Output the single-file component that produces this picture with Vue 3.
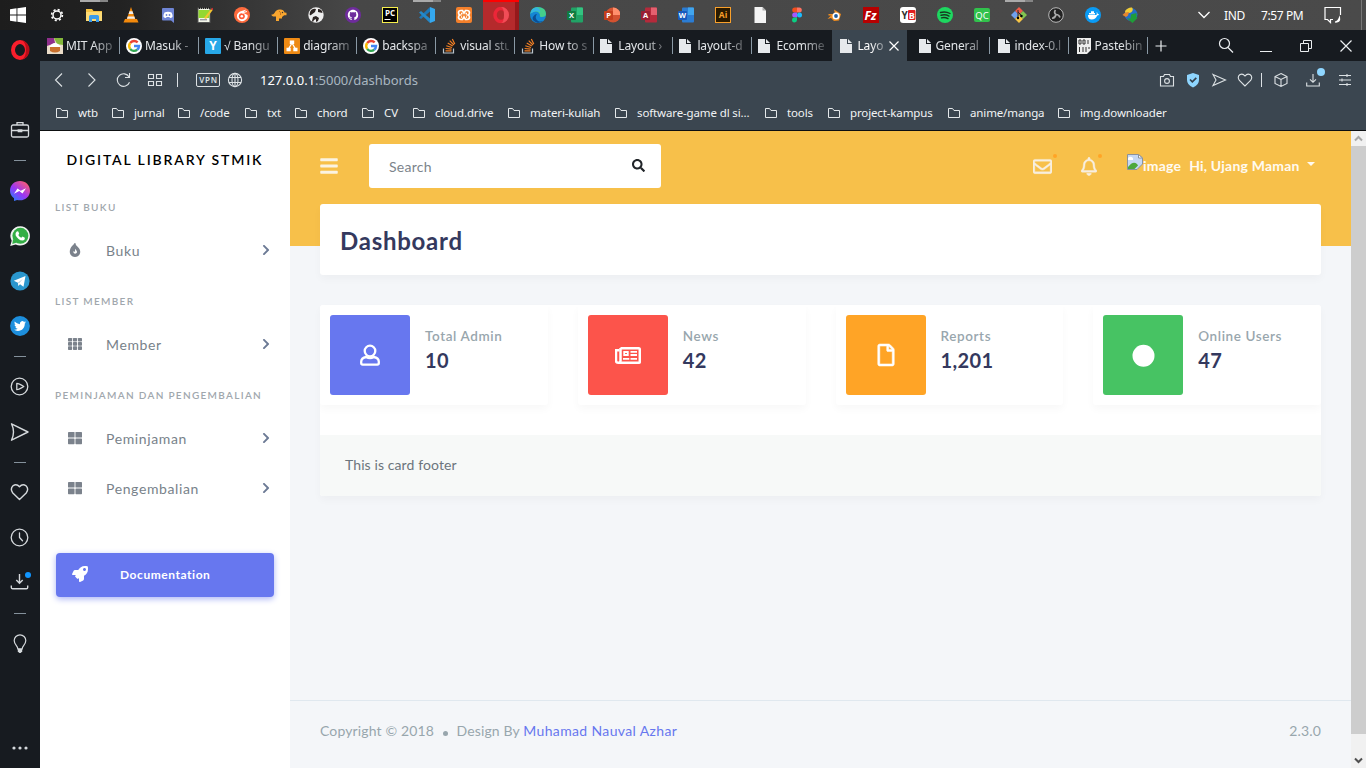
<script setup>
const sans = 'font-family="Open Sans, Noto Sans, sans-serif" font-weight="700" text-anchor="middle"'

const office = (a, b, c, letter, round) =>
  (round
    ? `<circle cx="9" cy="8" r="7.5" fill="${a}"/><path d="M9 .5A7.5 7.5 0 0 1 16.500 8H9z" fill="${b}"/>`
    : `<rect x="4" y="0.500" width="12" height="15" rx="1" fill="${a}"/><path d="M10 .5h5a1 1 0 0 1 1 1V8h-6z" fill="${b}"/>`) +
  `<rect y="4" width="9" height="9" rx="1" fill="${c}"/><text x="4.5" y="11.2" font-size="7.500" fill="#fff" ${sans}>${letter}</text>`

const apps = [
  { n: 'settings', s: '<g fill="none" stroke="#fff"><circle cx="8" cy="8" r="4" stroke-width="1.5"/><circle cx="8" cy="8" r="5.400" stroke-width="1.600" stroke-dasharray="2.1 2.14"/></g>' },
  { n: 'files', open: true, s: '<path d="M0 2h6l1.500 2H16v10H0z" fill="#f6c445"/><path d="M0 5h16v9H0z" fill="#fddb75"/><path d="M3 15V9.500q0-1.500 1.500-1.500h7q1.500 0 1.500 1.500V15h-3v-3H6v3z" fill="#3b9bea"/>' },
  { n: 'vlc', s: '<path d="M2 12h12l1.500 3.500H.5z" fill="#f58a0b"/><path d="M8 0 12.600 13H3.400z" fill="#f58a0b"/><path d="M6.500 4.300h3l.9 2.600H5.600zM4.700 9.500h6.600l.8 2.200H3.900z" fill="#eee"/>' },
  { n: 'discord', s: '<path d="M3 1h10a1 1 0 0 1 1 1v14l-3-2.500H3a1 1 0 0 1-1-1V2a1 1 0 0 1 1-1z" fill="#6f85d5"/><path d="M4.500 5.500Q8 4 11.500 5.500q1.200 2 1 4.500-1 1-2.500 1l-.6-.9H6.600L6 11q-1.500 0-2.500-1-.2-2.500 1-4.500z" fill="#fff"/><circle cx="6.500" cy="8" r=".9" fill="#6f85d5"/><circle cx="9.500" cy="8" r=".9" fill="#6f85d5"/>' },
  { n: 'notepad', s: '<rect x="1" y="1" width="12" height="14.500" fill="#f4f7ea" stroke="#555"/><rect x="1.500" y="3" width="11" height="8" fill="#93d832"/><path d="M3 12.800h7" stroke="#778"/><path d="M2 1h11" stroke="#222" stroke-dasharray="1 1" stroke-width="2"/><path d="m7 11 7-9 1.600 1.300L9 12z" fill="#f4c430"/><path d="m14 2 1-1.200 1.500 1.200-1 1.300z" fill="#d33"/>' },
  { n: 'pomodoro', s: '<circle cx="8" cy="8" r="8" fill="#ff6b3d"/><path d="M12.500 2.500 6 4.500Q1.500 7 3.500 11.500q3 4 7 2Q14.500 11 13.500 8L9 5.800z" fill="#fff"/><circle cx="7.800" cy="9.300" r="3" fill="#ff5a36"/><circle cx="7.800" cy="9.300" r="1.300" fill="#fff"/><path d="m8 6 5-1.500" stroke="#fff"/>' },
  { n: 'elephant', s: '<path d="M5 14V9.500Q.5 10 .5 7.500 2 8 3.500 6 5 2.500 8.500 2.500q4-.5 5 3l2 .2v2.500h-2.300L11 10v1.500H8V14z" fill="#f9a62f"/><path d="M8 4q2.500 1.500 1.500 4" fill="none" stroke="#c9731a"/><circle cx="11.500" cy="5.500" r=".7" fill="#333"/>' },
  { n: 'beaver', s: '<circle cx="8" cy="8" r="7.700" fill="#eee"/><path d="M2 5q2-4 6-3l-1 3-4 3q-2 1-1-3zm8-3q4 0 4.500 4L10 5zM4 14l1-4 3-1 3 2-1 3-2 1v-3l-2 1-1 2z" fill="#2c2523"/>' },
  { n: 'github', s: '<circle cx="8" cy="8" r="8" fill="#6e2c9c"/><g transform="translate(2.800 2.800) scale(.65)"><path fill="#fff" d="M8 0C3.580 0 0 3.580 0 8c0 3.540 2.290 6.530 5.470 7.590.4.070.55-.17.55-.38 0-.19-.01-.82-.01-1.490-2.010.37-2.530-.49-2.690-.94-.09-.23-.48-.94-.82-1.130-.28-.15-.68-.52-.01-.53.63-.01 1.080.58 1.230.82.72 1.210 1.870.87 2.330.66.070-.52.28-.87.51-1.070-1.780-.2-3.640-.89-3.640-3.950 0-.87.31-1.590.82-2.150-.08-.2-.36-1.020.08-2.120 0 0 .67-.21 2.200.82.64-.18 1.320-.27 2-.27s1.360.09 2 .27c1.530-1.040 2.200-.82 2.200-.82.44 1.100.16 1.920.08 2.120.51.56.82 1.270.82 2.150 0 3.070-1.870 3.750-3.650 3.950.29.25.54.73.54 1.480v2.200c0 .21.15.46.55.38A8 8 0 0 0 16 8c0-4.420-3.580-8-8-8z"/></g>' },
  { n: 'pycharm', s: `<rect x=".5" y=".5" width="15" height="15" fill="#000" stroke="#f5ee4c"/><text x="8" y="9" font-size="8" fill="#fff" ${sans}>PC</text><path d="M2.500 12.500h6" stroke="#fff"/>` },
  { n: 'code', open: true, s: '<path d="M11 0v4.500L2 12 0 10.500z" fill="#1d78b8"/><path d="M11 16v-4.500L2 4 0 5.500z" fill="#2489ca"/><path d="m11 0 5 2v12l-5 2z" fill="#35a8ef"/>' },
  { n: 'xampp', s: '<rect width="16" height="16" rx="2" fill="#f4802b"/><path d="M5 3.500h1.500L8 6l1.500-2.500H11q2.500 0 2.500 2.200Q13.500 7.500 12 8q1.500.5 1.500 2.300 0 2.200-2.500 2.200H9.500L8 10l-1.500 2.500H5q-2.500 0-2.500-2.200Q2.500 8.500 4 8q-1.500-.5-1.500-2.300 0-2.200 2.500-2.200zM5 6.500h1.500M9.500 6.500H11M5 10h1M10 10h1" fill="none" stroke="#fff" stroke-width="1.700"/>' },
  { n: 'opera', active: true, s: '<ellipse cx="8" cy="8" rx="6" ry="6.500" fill="none" stroke="#ed2638" stroke-width="3.500"/><path d="M8 0a8 8 0 0 1 0 16q3-1 3-8T8 0z" fill="#f14d57"/>' },
  { n: 'edge', s: '<circle cx="8" cy="8" r="8" fill="#1487d4"/><path d="M.3 7Q1 0 8 0q8 .5 8 7 0 3-4 3-3 0-2-2-1-4-5-3.500Q1.500 5 .3 7z" fill="#45cf8b"/><path d="M.3 7Q1 1 7 .2 11 2 10 5.500 7 3.500 3.500 5T.3 7z" fill="#35b5e2"/><path d="M7 7q-3 4 1 7 4 1.500 6.500-1.500Q12 15.500 8 16-1 13 5 7.500z" fill="#0c4f94"/>' },
  { n: 'excel', s: office('#21a366', '#33c481', '#107c41', 'X') },
  { n: 'powerpoint', s: office('#d35230', '#ff8f6b', '#c43e1c', 'P', true) },
  { n: 'access', s: office('#b52a3b', '#e4606f', '#9a1f33', 'A') },
  { n: 'word', s: office('#2b7cd3', '#41a5ee', '#185abd', 'W') },
  { n: 'illustrator', s: `<rect x=".5" y=".5" width="15" height="15" fill="#2a1a00" stroke="#f9a02b"/><text x="8" y="11.300" font-size="8.500" fill="#f9a02b" ${sans}>Ai</text>` },
  { n: 'document', s: '<path d="M2.500 0h8l3.500 3.500V16H2.500z" fill="#f4f4f4"/><path d="M10.500 0v3.500H14z" fill="#aaa"/>' },
  { n: 'figma', s: '<path d="M8 .5H5.700a2.500 2.500 0 0 0 0 5H8z" fill="#f24e1e"/><path d="M8 .5h2.300a2.500 2.500 0 0 1 0 5H8z" fill="#ff7262"/><path d="M8 5.500H5.700a2.500 2.500 0 0 0 0 5H8z" fill="#a259ff"/><circle cx="10.500" cy="8" r="2.500" fill="#1abcfe"/><path d="M8 10.500H5.700a2.500 2.500 0 1 0 2.300 2.500z" fill="#0acf83"/>' },
  { n: 'blender', s: '<path d="M8 2.500 15 7l-2 6.500-5 .5-3-3-3.500 1L5 8.500H2.500V7H9z" fill="#f08b1d"/><circle cx="10" cy="9" r="3.500" fill="#fff"/><circle cx="10" cy="9" r="1.900" fill="#235c9b"/>' },
  { n: 'filezilla', s: `<rect width="16" height="16" fill="#b70000"/><text x="7.500" y="12.500" font-size="12" fill="#fff" font-style="italic" ${sans}>Fz</text>` },
  { n: 'yb', s: `<rect width="16" height="16" rx="3" fill="#fff"/><rect x="8" y="3" width="7.500" height="10" rx="1" fill="#e02020"/><text x="4.500" y="12" font-size="10" fill="#333" ${sans}>Y</text><text x="11.700" y="11.500" font-size="9" fill="#fff" ${sans}>B</text>` },
  { n: 'spotify', s: '<circle cx="8" cy="8" r="8" fill="#1ed760"/><path d="M3.500 5.500q5-1.500 9.500 1M4 8.200q4.500-1.200 8 .9M4.500 10.800q3.500-1 6.500.8" fill="none" stroke="#17391f" stroke-width="1.400" stroke-linecap="round"/>' },
  { n: 'qc', s: `<rect y="1" width="16" height="14" rx="2" fill="#31c24c"/><text x="8" y="11.500" font-size="9.500" fill="#fff" font-family="Open Sans, sans-serif" text-anchor="middle">QC</text>` },
  { n: 'git', open: true, s: '<path d="m8 0 4 4-4 4-4-4z" fill="#ef5b49"/><path d="m4 4 4 4-4 4-4-4z" fill="#6fa1ee"/><path d="m12 4 4 4-4 4-4-4z" fill="#82c451"/><path d="m8 8 4 4-4 4-4-4z" fill="#f7c546"/><path d="M7 3v8M7 5l3 3v2" stroke="#2b2b2b" fill="none"/><circle cx="7" cy="11" r="1.200"/><circle cx="10.500" cy="9" r="1.200"/>' },
  { n: 'obs', s: '<circle cx="8" cy="8" r="7.300" fill="#222" stroke="#bbb"/><path d="M7.500 3q-2 2.500.5 4.500M12 10.500q-1-3-4-3M4 11q3 .5 4-3.500" stroke="#aaa" stroke-width="1.700" fill="none"/>' },
  { n: 'docker', s: '<circle cx="8" cy="8" r="8" fill="#0a9bf5"/><path d="M3 8h8.500q.7-2 0-3 1.200.5 1.200 2 1 0 1.500.5-.7 1-2 1-1.500 4-5.500 4Q3 12.500 3 8zM4 6h6v1.500H4zM6 4.200h3V6H6z" fill="#fff"/>' },
  { n: 'idm', s: '<circle cx="9" cy="7.500" r="6.500" fill="#246fc6"/><path d="M3 4q3-4 7-3.500Q12 3 9 5.500L3.500 7z" fill="#f2cd35"/><path d="M.5 8q2-3 6.500-3l-1 3.500L4 10z" fill="#e5862f"/><path d="m9 7.500 5.500-1.500v4l1 1-5 5L5 11.500h3.500z" fill="#1f9d3a"/>' },
]

const google = '<g fill="none" stroke-width="3"><path d="M3.200 4.300A6.400 6.400 0 0 1 12.600 3.500" stroke="#ea4335"/><path d="M3.200 11.700a6.400 6.400 0 0 1 0-7.400" stroke="#fbbc05"/><path d="M12 12.700a6.400 6.400 0 0 1-8.800-1" stroke="#34a853"/><path d="M8 8h6.300a6.300 6.300 0 0 1-2.300 4.700" stroke="#4285f4"/></g>'
const googleFav = `<circle cx="8" cy="8" r="8" fill="#fff"/><g transform="translate(1.600 1.600) scale(.8)">${google}</g>`
const stack = '<path d="M1.500 10.500V15h10v-4.500" fill="none" stroke="#bcc5cc" stroke-width="1.200"/><path d="M3.500 12.800h6M3.600 10.500l6 .7M4.300 7.800l5.700 1.700M5.700 5l5.100 3M7.700 2.700l4.300 4.300M10.300 1l2.500 5" stroke="#f48024" stroke-width="1.200"/>'
const sheet = '<path d="M0 1h7v5h5v9H0z" fill="#e6e9ec"/><path d="M8 1l4 4H8z" fill="#e6e9ec"/>'
const tabs = [
  { t: 'MIT App', s: '<rect width="16" height="16" fill="#eadcc8"/><path d="M0 0h7l1 5-8 3z" fill="#8f2f8c"/><path d="M7 0h9v7l-6-1z" fill="#84b83b"/><path d="M2 9q6-8 12 0z" fill="#fff"/><path d="M3 9h10v4q-5 3-10 0z" fill="#c8702d"/>', w: 16, g: 3 },
  { t: 'Masuk -', s: googleFav, w: 16, g: 3 },
  { t: '√ Bangu', s: `<rect width="16" height="16" rx="1" fill="#27a8e8"/><text x="8" y="12.300" font-size="12" fill="#fff" ${sans}>Y</text>`, w: 16, g: 3 },
  { t: 'diagram', s: '<rect width="16" height="16" rx="1" fill="#ee8a14"/><path d="M8 5 4.500 11M8 5l3.500 6" stroke="#fff" stroke-width="1.300"/><path d="M5.800 2.500h4.400v3.600H5.800zM2.500 9.700h4.200v3.600H2.500zM9.300 9.700h4.200v3.600H9.300z" fill="#fff"/>', w: 16, g: 3 },
  { t: 'backspa', s: googleFav, w: 16, g: 3 },
  { t: 'visual stu', s: stack, w: 14, g: 4 },
  { t: 'How to s', s: stack, w: 14, g: 4 },
  { t: 'Layout ›', s: sheet, w: 12, g: 6 },
  { t: 'layout-d', s: sheet, w: 12, g: 6 },
  { t: 'Ecomme', s: sheet, w: 12, g: 6, nosep: true },
  { t: 'Layo', s: sheet, w: 12, g: 5, active: true },
  { t: 'General', s: sheet, w: 12, g: 5 },
  { t: 'index-0.l', s: sheet, w: 12, g: 5 },
  { t: 'Pastebin', s: '<path d="M0 0h14v12l-4 4H0z" fill="#eee"/><path d="M2 2h2v4H2zM6 2h2v4H6zM11 2v4M2.500 9v5M6 9v5M9 9v5M12 9v2" fill="none" stroke="#333"/>', w: 14, g: 4 },
]

const bookmarks = [
  ['wtb', 56], ['jurnal', 66], ['/code', 67], ['txt', 50], ['chord', 67], ['CV', 51],
  ['cloud.drive', 95], ['materi-kuliah', 107], ['software-game dl si...', 150], ['tools', 63],
  ['project-kampus', 120], ['anime/manga', 110], ['img.downloader', 130],
]

const strip = [
  { h: 40, s: '<ellipse cx="10" cy="10" rx="7" ry="8" fill="none" stroke="#fa1e2c" stroke-width="4"/><path d="M12 .3a10 10 0 0 1 0 19.400q4-2.700 4-9.700T12 .3z" fill="#b80d18"/>' },
  { h: 40 },
  { h: 40, s: '<g fill="none" stroke="#d5d9dc" stroke-width="1.300"><rect x="1.500" y="5" width="17" height="12" rx="1.500"/><path d="M7 5V2.700h6V5M1.500 10.500h6.500M12 10.500h6.500"/><path d="M8.300 10h3.400v1.700H8.300z" fill="#d5d9dc"/></g>' },
  { h: 20, dash: true },
  { h: 42, s: '<defs><linearGradient id="ms" x1="0" y1="1" x2=".8" y2="0"><stop offset="0" stop-color="#168aff"/><stop offset=".5" stop-color="#9a35f5"/><stop offset="1" stop-color="#ff5d6e"/></linearGradient></defs><path d="M10 0c5.700 0 10 4.200 10 9.700s-4.300 9.600-10 9.600c-1 0-2-.1-2.900-.4L4 20v-2.800C1.500 15.500 0 12.900 0 9.700 0 4.200 4.300 0 10 0z" fill="url(#ms)"/><path d="m4 12.700 3.500-5.200 3.200 2.300 5.300-2.600-3.500 5.200-3.200-2.300z" fill="#fff"/>' },
  { h: 47, s: '<path d="M10.500.2a9.700 9.700 0 1 1-4.800 18.300L.2 20l1.500-5.300A9.700 9.700 0 0 1 10.500.2z" fill="#f0f3f0"/><circle cx="10.400" cy="9.800" r="8" fill="#33ae45"/><path d="M3 13 2.300 18l4.500-1.500z" fill="#33ae45"/><path d="M7 5.200l1.300.2.9 2.300-.9 1.200q1 2 3 2.900l1.200-1.200 2.300 1.100q.3 2.500-2.300 2.900-4.500-.4-6.900-5.400Q5 6.500 7 5.200z" fill="#fff"/>' },
  { h: 44, s: '<circle cx="10" cy="10" r="9.600" fill="#2a96cd"/><path d="M3.800 9.800 15.500 5l-2 10.800-3.500-2.600-1.700 1.800-.4-3.300z" fill="#fff"/><path d="m7.900 11.700 5.300-4.200-4.300 5z" fill="#b9cfdc"/>' },
  { h: 46, s: '<circle cx="10" cy="10" r="9.900" fill="#1d8fdd"/><g transform="translate(4 4) scale(.5)"><path fill="#fff" d="M23.953 4.570a10 10 0 01-2.825.775 4.958 4.958 0 002.163-2.723c-.951.555-2.005.959-3.127 1.184a4.920 4.920 0 00-8.384 4.482C7.690 8.095 4.067 6.130 1.640 3.162a4.822 4.822 0 00-.666 2.475c0 1.710.87 3.213 2.188 4.096a4.904 4.904 0 01-2.228-.616v.06a4.923 4.923 0 003.946 4.827 4.996 4.996 0 01-2.212.085 4.936 4.936 0 004.604 3.417 9.867 9.867 0 01-6.102 2.105c-.39 0-.779-.023-1.170-.067a13.995 13.995 0 007.557 2.209c9.053 0 13.998-7.496 13.998-13.985 0-.21 0-.42-.015-.63A9.935 9.935 0 0024 4.590z"/></g>' },
  { h: 15, dash: true },
  { h: 45, s: '<g fill="none" stroke="#d5d9dc" stroke-width="1.300"><circle cx="9.500" cy="9.500" r="8.300"/><path d="M6.800 6.300v6.400q2 0 7-3.200-5-3.200-7-3.200z" stroke-linejoin="round"/></g>' },
  { h: 46, s: '<path d="M1.500 1.800 18 10 1.500 18.200q4-8.200 0-16.400z" fill="none" stroke="#d5d9dc" stroke-width="1.400" stroke-linejoin="round"/>' },
  { h: 14, dash: true },
  { h: 46, s: '<path d="M9.500 17.500 2.800 11q-3-4 .2-7.200 3.500-2.700 6.500 1 3-3.700 6.500-1 3.200 3.200.2 7.200z" fill="none" stroke="#d5d9dc" stroke-width="1.400" stroke-linejoin="round"/>' },
  { h: 45, s: '<g fill="none" stroke="#d5d9dc" stroke-width="1.300" stroke-linecap="round"><circle cx="9.500" cy="9.500" r="8.300"/><path d="M9.500 5v4.500l3 3.300"/></g>' },
  { h: 45, dot: true, s: '<path d="M9.500 1v9M6.300 7l3.200 3.200L12.700 7M1.300 12.500v2q0 1.300 1.300 1.300h13.800q1.300 0 1.300-1.300v-2" fill="none" stroke="#d5d9dc" stroke-width="1.400"/>' },
  { h: 16, dash: true },
  { h: 46, s: '<path d="M7.800 14.800c0-3-3.600-4-3.600-8.200a5.800 5.800 0 0 1 11.600 0c0 4.200-3.600 5.200-3.600 8.200z" fill="none" stroke="#d5d9dc" stroke-width="1.200"/><path d="M7.800 15h4.400v2.500l-1.500 1.500H9.300l-1.500-1.500z" fill="#d5d9dc"/>' },
  { h: 61 },
  { h: 40, s: '<g fill="#d5d9dc"><circle cx="4" cy="10" r="1.600"/><circle cx="10" cy="10" r="1.600"/><circle cx="16" cy="10" r="1.600"/></g>' },
]

const glyphs = {
  back: '<path d="M11 1.500 4.500 8l6.500 6.500"/>',
  forward: '<path d="m5.500 1.500 6.500 6.500-6.500 6.500"/>',
  reload: '<path d="M14.500 10.300A6.300 6.300 0 1 1 14.100 5M14.500 1v4.500H10"/>',
  grid: '<path d="M1.500 2.500h5v4h-5zM9.500 2.500h5v4h-5zM1.500 9.500h5v4h-5zM9.500 9.500h5v4h-5z"/>',
  globe: '<circle cx="8" cy="8" r="6.600"/><ellipse cx="8" cy="8" rx="3" ry="6.600"/><path d="M8 1.400v13.200M1.900 5.500h12.200M1.900 10.500h12.200"/>',
  camera: '<path d="M1.500 4.500h3l1-2h5l1 2h3v9.500h-13z"/><circle cx="8" cy="9" r="2.400"/>',
  send: '<path d="M2 2.500 14.500 8 2 13.500 5 8z"/>',
  heart: '<path d="M8 14 2.400 8.500Q0 5 2.700 2.800 5.700 1 8 4q2.300-3 5.300-1.200Q16 5 13.600 8.500z"/>',
  cube: '<path d="m8 1.500 6 3v7l-6 3-6-3v-7zM2 4.500l6 3 6-3M8 7.500v7"/>',
  download: '<path d="M8 2v8M5 7.300l3 3 3-3M1.700 10.500V14h12.600v-3.500"/>',
  sliders: '<path d="M2 3.500h12M2 8h12M2 12.500h12M10 2v3M5 6.500v3M10 11v3"/>',
}

const chevron = 'M285.476 272.971L91.132 467.314c-9.373 9.373-24.569 9.373-33.941 0l-22.667-22.667c-9.357-9.357-9.375-24.522-.04-33.901L188.505 256 34.484 101.255c-9.335-9.379-9.317-24.544.04-33.901l22.667-22.667c9.373-9.373 24.569-9.373 33.941 0L285.475 239.030c9.373 9.372 9.373 24.568.001 33.941z'
const fire = '<path transform="translate(64 0)" d="M216 23.860c0-23.800-30.650-32.770-44.150-13.040C120 90 60 120 25 200 8 240 0 280 0 320c0 105.870 86.130 192 192 192s192-86.130 192-192c0-170.290-168-193-168-296.140zM200 210c30 70 75 75 65 130-10 40-45 52-80 48-50-8-62-60-40-95 10 20 25 30 40 25 25-12-5-50 15-108z" fill-rule="evenodd"/>'
const th = [32, 186, 340].map(y => [0, 181, 362].map(x => `<rect x="${x}" y="${y}" width="150" height="132" rx="24"/>`).join('')).join('')
const thLarge = [32, 272].map(y => [0, 272].map(x => `<rect x="${x}" y="${y}" width="240" height="208" rx="24"/>`).join('')).join('')
const menu = [
  { title: 'List Buku', items: [{ t: 'Buku', s: fire }] },
  { title: 'List Member', items: [{ t: 'Member', s: th }] },
  { title: 'Peminjaman dan Pengembalian', items: [{ t: 'Peminjaman', s: thLarge }, { t: 'Pengembalian', s: thLarge }] },
]

const stats = [
  { t: 'Total Admin', v: '10', c: 'primary', s: '<g fill="none" stroke="#fff" stroke-width="2.300"><circle cx="13" cy="9" r="5.300"/><path d="M9.200 15Q4.200 15.800 4.200 19.800v1.300q0 1.500 1.500 1.500h14.600q1.500 0 1.500-1.500v-1.300q0-4-5-4.800-3.800 2.300-7.600 0z" stroke-linejoin="round"/></g>' },
  { t: 'News', v: '42', c: 'danger', s: '<g fill="none" stroke="#fff" stroke-width="2.500"><path d="M5.500 6.300h18.300q1 0 1 1V19.800q0 1-1 1H3q-2 0-2-2V8.300h3.500"/><path d="M5.500 6V19q0 1-1 2"/><path d="M9.200 10h3.600v3H9.200zM15.500 9.800h6.500M15.500 13h6.500M8 16.800h6.300M15.500 16.800h6.500" stroke-width="1.800"/></g>' },
  { t: 'Reports', v: '1,201', c: 'warning', s: '<path transform="translate(4.750 2) scale(.043)" fill="#fff" stroke="#fff" stroke-width="12" d="M369.900 97.900L286 14C277 5 264.800-.1 252.100-.1H48C21.500 0 0 21.500 0 48v416c0 26.500 21.500 48 48 48h288c26.500 0 48-21.500 48-48V131.900c0-12.700-5.100-25-14.100-34zM332.100 128H256V51.900l76.100 76.100zM48 464V48h160v104c0 13.300 10.700 24 24 24h104v288H48z"/>' },
  { t: 'Online Users', v: '47', c: 'success', s: '<circle cx="13.500" cy="13.700" r="11" fill="#fff"/>' },
]
</script>

<template>
  <div class="screen">
    <header class="taskbar">
      <div class="start">
        <svg width="16" height="16" viewBox="0 0 16 16" fill="#fff"><path d="M0 2.200 6.500 1.300v6.200H0zM7.400 1.200 16 0v7.500H7.400zM0 8.400h6.500v6.300L0 13.800zM7.400 8.400H16V16l-8.600-1.200z" /></svg>
      </div>
      <div v-for="a in apps" :key="a.n" class="app" :class="{ open: a.open, active: a.active }">
        <svg width="16" height="16" viewBox="0 0 16 16" v-html="a.s"></svg>
      </div>
      <div class="tray">
        <svg class="caret" width="12" height="8" viewBox="0 0 12 8" fill="none" stroke="#fff" stroke-width="1.300"><path d="m.5 1 5.500 5.500L11.500 1" /></svg>
        <span class="lang">IND</span>
        <span class="clock">7:57 PM</span>
        <svg class="note" width="18" height="18" viewBox="0 0 18 18" fill="none" stroke="#fff" stroke-width="1.200"><path d="M9 13.500H6.500v3l-3-3H1v-12h15.500V9" /><path d="M15.500 11.500q1 5-4.500 4.500 3 0 4.500-4.500z" fill="#fff" /></svg>
      </div>
    </header>

    <div class="body">
      <nav class="strip">
        <div v-for="(i, k) in strip" :key="k" class="cell" :style="{ height: i.h + 'px' }">
          <i v-if="i.dash" class="dash"></i>
          <svg v-if="i.s" width="20" height="20" viewBox="0 0 20 20" v-html="i.s"></svg>
          <b v-if="i.dot" class="dot"></b>
        </div>
      </nav>

      <div class="window">
        <div class="tabs">
          <div v-for="t in tabs" :key="t.t" class="tab" :class="{ active: t.active, nosep: t.nosep }">
            <svg :width="t.w" height="16" :viewBox="`0 0 ${t.w} 16`" v-html="t.s"></svg>
            <span class="label" :style="{ marginLeft: t.g + 'px' }">{{ t.t }}</span>
            <svg v-if="t.active" class="x" width="10" height="10" viewBox="0 0 10 10" stroke="#fff" stroke-width="1.200"><path d="m.5.5 9 9m0-9-9 9" /></svg>
          </div>
          <svg class="plus" width="12" height="12" viewBox="0 0 12 12" stroke="#eceff1" stroke-width="1.200"><path d="M6 .5v11M.5 6h11" /></svg>
          <div class="controls">
            <svg width="40" height="30" viewBox="0 0 40 30" fill="none" stroke="#eceff1" stroke-width="1.200"><circle cx="18.500" cy="12.500" r="5" /><path d="m22 16.500 5 5" /></svg>
            <svg width="40" height="30" viewBox="0 0 40 30" stroke="#eceff1"><path d="M14 20.500h12" /></svg>
            <svg width="40" height="30" viewBox="0 0 40 30" fill="none" stroke="#eceff1"><path d="M14.500 12.500h8v8h-8zM17.500 12V9.500h8v8H23" /></svg>
            <svg width="40" height="30" viewBox="0 0 40 30" stroke="#eceff1" stroke-width="1.200"><path d="m14.500 9.500 11 11m0-11-11 11" /></svg>
          </div>
        </div>

        <div class="toolbar">
          <span v-for="n in ['back', 'forward', 'reload', 'grid']" :key="n" class="tool"><svg class="line" width="16" height="16" viewBox="0 0 16 16" v-html="glyphs[n]"></svg></span>
          <i class="bar first"></i>
          <span class="vpn">VPN</span>
          <svg class="line globe" width="16" height="16" viewBox="0 0 16 16" v-html="glyphs.globe"></svg>
          <span class="url"><b>127.0.0.1</b>:5000/dashbords</span>
          <div class="right-tools">
            <span class="rt"><svg class="line" width="16" height="16" viewBox="0 0 16 16" v-html="glyphs.camera"></svg></span>
            <span class="rt"><svg width="14" height="16" viewBox="0 0 14 16"><path d="m7 1 6 2v5q0 5-6 7.500Q1 13 1 8V3z" fill="#8fd6ff" /><path d="m4 7.500 2.300 2.300 4-4" fill="none" stroke="#33404c" stroke-width="1.700" /></svg></span>
            <span class="rt"><svg class="line" width="16" height="16" viewBox="0 0 16 16" v-html="glyphs.send"></svg></span>
            <span class="rt"><svg class="line" width="16" height="16" viewBox="0 0 16 16" v-html="glyphs.heart"></svg></span>
            <i class="bar"></i>
            <span class="rt cube"><svg class="line" width="16" height="16" viewBox="0 0 16 16" v-html="glyphs.cube"></svg></span>
            <span class="rt down"><svg class="line" width="16" height="16" viewBox="0 0 16 16" v-html="glyphs.download"></svg><b class="badge"></b></span>
            <span class="rt slid"><svg class="line" width="16" height="16" viewBox="0 0 16 16" v-html="glyphs.sliders"></svg></span>
          </div>
        </div>

        <div class="bookmarks">
          <div v-for="b in bookmarks" :key="b[0]" class="bm" :style="{ width: b[1] + 'px' }">
            <svg width="12" height="12" viewBox="0 0 12 12" fill="none" stroke="#e4e8ea"><path d="M.5 10.500v-9h4l1.500 2h5.500v7z" /></svg>
            <span>{{ b[0] }}</span>
          </div>
        </div>

        <div class="page">
          <aside class="side">
            <div class="brand">DIGITAL LIBRARY STMIK</div>
            <template v-for="g in menu" :key="g.title">
              <div class="head">{{ g.title }}</div>
              <div v-for="i in g.items" :key="i.t" class="item">
                <svg class="ico" width="14" height="14" viewBox="0 0 512 512" fill="#7b828c" v-html="i.s"></svg>
                <span>{{ i.t }}</span>
                <svg class="chev" width="8" height="12" viewBox="0 0 320 512" fill="#6c7a95"><path :d="chevron" /></svg>
              </div>
            </template>
            <div class="doc">
              <svg width="16" height="16" viewBox="0 0 512 512" fill="#fff"><path d="M505.100 19.100C503.800 13 499 8.200 492.900 6.900 460.700 0 435.500 0 410.400 0 307.200 0 245.300 55.200 199.100 128H94.900c-18.200 0-34.800 10.300-42.900 26.500L2.600 253.300c-8 16 3.600 34.700 21.500 34.700h95.100c-5.900 12.800-11.900 25.500-18 37.700-3.100 6.200-1.900 13.600 3 18.500l63.600 63.600c4.900 4.900 12.300 6.100 18.500 3 12.200-6.100 24.900-12 37.700-17.900V488c0 17.800 18.800 29.400 34.700 21.500l98.700-49.400c16.300-8.100 26.500-24.800 26.500-42.900V312.800c72.600-46.400 128-108.100 128-211.100.1-25.200.1-50.400-6.800-82.600zM400 160c-26.500 0-48-21.500-48-48s21.500-48 48-48 48 21.500 48 48-21.500 48-48 48z" /></svg>
              <span>Documentation</span>
            </div>
          </aside>

          <main class="main">
            <div class="topnav">
              <svg class="burger" width="18" height="20" viewBox="0 0 448 512" fill="#fbf3e2"><path d="M16 132h416c8.837 0 16-7.163 16-16V76c0-8.837-7.163-16-16-16H16C7.163 60 0 67.163 0 76v40c0 8.837 7.163 16 16 16zm0 160h416c8.837 0 16-7.163 16-16v-40c0-8.837-7.163-16-16-16H16c-8.837 0-16 7.163-16 16v40c0 8.837 7.163 16 16 16zm0 160h416c8.837 0 16-7.163 16-16v-40c0-8.837-7.163-16-16-16H16c-8.837 0-16 7.163-16 16v40c0 8.837 7.163 16 16 16z" /></svg>
              <div class="search">
                <span>Search</span>
                <svg width="13" height="13" viewBox="0 0 512 512" fill="#212529"><path d="M505 442.700L405.300 343c-4.500-4.500-10.600-7-17-7H372c27.600-35.300 44-79.700 44-128C416 93.100 322.900 0 208 0S0 93.100 0 208s93.100 208 208 208c48.300 0 92.700-16.400 128-44v16.300c0 6.400 2.500 12.500 7 17l99.700 99.700c9.400 9.400 24.600 9.400 33.900 0l28.300-28.300c9.400-9.400 9.400-24.600.1-34zM208 336c-70.700 0-128-57.200-128-128 0-70.700 57.200-128 128-128 70.700 0 128 57.200 128 128 0 70.700-57.200 128-128 128z" /></svg>
              </div>
              <div class="notif mail">
                <svg width="19" height="19" viewBox="0 0 512 512" fill="#f8efe0" stroke="#f8efe0" stroke-width="12"><path d="M464 64H48C21.490 64 0 85.490 0 112v288c0 26.510 21.490 48 48 48h416c26.510 0 48-21.490 48-48V112c0-26.510-21.490-48-48-48zm0 48v40.805c-22.422 18.259-58.168 46.651-134.587 106.490-16.841 13.247-50.201 45.072-73.413 44.701-23.208.375-56.579-31.459-73.413-44.701C106.180 199.465 70.425 171.067 48 152.805V112h416zM48 400V214.398c22.914 18.251 55.409 43.862 104.938 82.646 21.857 17.205 60.134 55.186 103.062 54.955 42.717.231 80.509-37.199 103.053-54.947 49.528-38.783 82.032-64.401 104.947-82.653V400H48z" /></svg>
                <i></i>
              </div>
              <div class="notif bell">
                <svg width="16" height="19" viewBox="0 0 448 512" fill="#f8efe0" stroke="#f8efe0" stroke-width="12"><path d="M439.390 362.290c-19.320-20.760-55.470-51.990-55.470-154.290 0-77.700-54.480-139.900-127.940-155.160V32c0-17.670-14.320-32-31.980-32s-31.980 14.330-31.980 32v20.840C118.560 68.100 64.080 130.300 64.080 208c0 102.300-36.150 133.530-55.470 154.290-6 6.450-8.660 14.160-8.610 21.710.11 16.400 12.980 32 32.100 32h383.800c19.120 0 32-15.600 32.100-32 .05-7.550-2.610-15.270-8.610-21.710zM67.530 368c21.220-27.970 44.420-74.330 44.530-159.420 0-.2-.06-.38-.06-.58 0-61.860 50.140-112 112-112s112 50.140 112 112c0 .2-.06.38-.06.58.11 85.100 23.310 131.460 44.530 159.420H67.530zM224 512c35.320 0 63.970-28.650 63.970-64H160.030c0 35.350 28.650 64 63.970 64z" /></svg>
                <i></i>
              </div>
              <div class="user">
                <svg width="16" height="16" viewBox="0 0 16 16"><path d="M.5.500h11L15.500 4v6L10 15.500H.5z" fill="#c6d8f4" stroke="#8b929c" /><path d="M11.500.500V4h4z" fill="#fff" stroke="#8b929c" /><path d="M1 4q2-2.500 5 0v2H1z" fill="#fff" /><path d="M1 15v-2q5-6.500 9-3l1 1.500L7.500 15z" fill="#4ea83c" /></svg>
                <span class="alt">image</span><span class="name">Hi, Ujang Maman</span>
                <b></b>
              </div>
            </div>

            <section class="title"><h1>Dashboard</h1></section>

            <section class="card">
              <div class="stats">
                <div v-for="s in stats" :key="s.t" class="stat">
                  <div class="box" :class="s.c"><svg width="26" height="26" viewBox="0 0 26 26" v-html="s.s"></svg></div>
                  <div class="txt"><h4>{{ s.t }}</h4><p>{{ s.v }}</p></div>
                </div>
              </div>
              <div class="cardfoot">This is card footer</div>
            </section>

            <footer class="foot">
              <div>Copyright © 2018 <i></i> Design By <a>Muhamad Nauval Azhar</a></div>
              <span>2.3.0</span>
            </footer>
          </main>

          <div class="scroll">
            <svg width="15" height="15" viewBox="0 0 15 15" fill="none" stroke="#a8a8a8" stroke-width="2"><path d="m4 9.500 3.500-3.500L11 9.500" /></svg>
            <div class="thumb"></div>
            <svg width="15" height="15" viewBox="0 0 15 15" fill="none" stroke="#505050" stroke-width="2"><path d="M4 5.500 7.500 9 11 5.500" /></svg>
          </div>
        </div>
      </div>
    </div>
  </div>
</template>

<style>
body { overflow: hidden; }
</style>

<style scoped>
.screen { width: 1366px; height: 768px; display: flex; flex-direction: column; overflow: hidden; font-family: "Noto Sans", sans-serif; }
.screen * { box-sizing: border-box; }
svg { display: block; flex: none; }
.taskbar { height: 30px; flex: none; display: flex; background: linear-gradient(90deg, #1d1d1d 0, #222 120px, #474747 350px, #4a4a4a); }
.start { width: 38px; padding-left: 10px; display: flex; align-items: center; }
.app { width: 37px; display: flex; align-items: center; justify-content: center; }
.app.open { background: linear-gradient(90deg, #aaa 0 20px, #858585 20px) 5px 0 / 28px 2px no-repeat; }
.app.active { background: linear-gradient(#f00, #f00) 1px 0 / 36px 2px no-repeat, linear-gradient(90deg, #b52a2c 0 32px, #95191b 32px) 1px 0 / 36px 30px no-repeat; }
.tray { flex: 1; display: flex; align-items: center; color: #fff; font-size: 12px; letter-spacing: -.4px; border-right: 1px solid #777; margin-right: 4px; }
.caret { margin-left: 50px; }
.lang { width: 36px; margin-left: 14px; }
.clock { width: 64px; padding-left: 1px; white-space: nowrap; }
.body { flex: 1; display: flex; min-height: 0; }
.strip { width: 40px; flex: none; background: #171b20; }
.cell { display: flex; align-items: center; justify-content: center; position: relative; }
.dash { width: 12px; height: 1px; background: #84919b; }
.dot { position: absolute; left: 25px; top: 12px; width: 6px; height: 6px; border-radius: 50%; background: #1196ff; }
.window { flex: 1; display: flex; flex-direction: column; min-width: 0; }
.tabs { height: 31px; flex: none; background: #171b20; display: flex; align-items: center; color: #e3e6e9; font-size: 12px; letter-spacing: -.15px; }
.tab { width: 79.050px; height: 31px; padding: 0 5px 0 7px; display: flex; align-items: center; position: relative; }
.tab::after { content: ""; position: absolute; right: -1px; top: 7px; width: 1px; height: 17px; background: #8a99a5; }
.tab.active::after, .tab.nosep::after { display: none; }
.tab.active { background: linear-gradient(#3b4650, #3b4650) 2px 0 / 75px 31px no-repeat; color: #fff; padding-left: 10px; }
.tab.active ~ .tab { padding-left: 9px; }
.label { flex: 1; min-width: 0; white-space: nowrap; mask-image: linear-gradient(90deg, #000 26px, rgba(0,0,0,.3) 47px); }
.tab.active .label { flex: 0 0 26px; mask-image: linear-gradient(90deg, #000 14px, rgba(0,0,0,.4) 26px); }
.x { margin-left: 6px; }
.plus { margin-left: 8px; }
.controls { margin-left: auto; display: flex; }
.toolbar { height: 38px; flex: none; background: #3b4650; display: flex; align-items: center; padding-left: 3px; }
.line { fill: none; stroke: #dce1e4; stroke-width: 1.100; }
.tool { width: 32px; display: flex; justify-content: center; }
.bar { width: 1px; height: 14px; background: #dce1e4; margin: 0 3px 0 3px; }
.bar.first { margin: 0 18px 0 6px; }
.vpn { width: 24px; height: 14px; border: 1px solid #dce1e4; border-radius: 2px; color: #dce1e4; font-size: 8px; font-weight: 600; line-height: 12px; text-align: center; letter-spacing: .8px; padding-left: 1px; }
.globe { margin: 0 17px 0 7px; }
.url { font-size: 13px; color: #a9b6c0; }
.url b { color: #fff; font-weight: 400; }
.right-tools { margin-left: auto; display: flex; align-items: center; padding-right: 6px; }
.rt { width: 26px; display: flex; justify-content: center; position: relative; }
.cube { width: 31px; }
.down { width: 34px; }
.slid { width: 30px; }
.badge { position: absolute; left: 21px; top: -4px; width: 8px; height: 8px; border-radius: 50%; background: #8fd6ff; }
.bookmarks { height: 32px; flex: none; background: #3b4650; border-bottom: 1px solid #0d0f11; padding: 0 0 4px 16px; display: flex; align-items: center; color: #f1f3f4; font-size: 11.500px; letter-spacing: -.13px; }
.bm { flex: none; display: flex; align-items: center; gap: 10px; white-space: nowrap; }
.page { flex: 1; display: flex; min-height: 0; font-family: Lato, "Noto Sans", sans-serif; }
.side { width: 250px; flex: none; background: #fff; }
.brand { height: 51px; padding-top: 7px; line-height: 43px; text-align: center; font-size: 14px; font-weight: 600; letter-spacing: 1.850px; color: #000; white-space: nowrap; }
.head { height: 44px; padding: 15px 15px 0; line-height: 20px; font-size: 10px; font-weight: 600; letter-spacing: 1.320px; text-transform: uppercase; color: #a0a7ad; white-space: nowrap; }
.item { height: 50px; display: flex; align-items: center; padding: 0 20px 2px 28px; font-size: 14px; letter-spacing: .62px; color: #78828a; }
.item span { margin-left: 24px; padding-top: 1px; }
.chev { margin: 0 0 1px auto; }
.doc { margin: 39px 16px 0; height: 44px; border-radius: 4px; background: #6777ef; box-shadow: 0 2px 6px #acb5f6; display: flex; align-items: center; padding-left: 16px; color: #fff; font-size: 12px; font-weight: 700; letter-spacing: .55px; }
.doc svg { margin-bottom: 2px; }
.doc span { margin: 0 0 1px 32px; }
.main { flex: 1; min-width: 0; padding: 0 30px; display: flex; flex-direction: column; background: linear-gradient(#f7c04a, #f7c04a) 0 0 / 100% 115px no-repeat #f4f6f9; }
.topnav { height: 73px; flex: none; display: flex; align-items: flex-start; padding-top: 13px; }
.burger { margin: 12px 31px 0 0; }
.search { width: 292px; height: 44px; border-radius: 3px; background: #fff; display: flex; align-items: center; justify-content: space-between; padding: 0 16px 2px 20px; color: #7c848b; font-size: 14px; letter-spacing: .25px; }
.search span { padding-top: 2px; }
.notif { position: relative; margin-top: 13px; }
.notif i { position: absolute; right: -5px; top: -3px; width: 4px; height: 4px; border-radius: 50%; background: #ffa426; }
.mail { margin-left: auto; }
.bell { margin-left: 29px; }
.user { margin-left: 30px; height: 44px; padding-bottom: 2px; display: flex; align-items: center; color: #fffaf0; font-size: 14px; font-weight: 700; letter-spacing: .2px; width: 194px; white-space: nowrap; }
.user svg { margin-bottom: 7px; }
.name { margin-left: 8px; }
.user b { margin: 0 0 2px 7px; border: 4px solid transparent; border-top-color: #fffaf0; border-bottom: 0; }
.title { height: 71px; flex: none; background: #fff; border-radius: 3px; box-shadow: 0 4px 8px rgba(0,0,0,.03); padding: 0 20px; display: flex; align-items: center; }
h1 { margin: 2px 0 0; font-size: 24px; font-weight: 700; color: #34395e; letter-spacing: .75px; }
.card { margin-top: 30px; height: 191px; flex: none; background: #fff; border-radius: 3px; box-shadow: 0 4px 8px rgba(0,0,0,.03); overflow: hidden; }
.stats { display: grid; grid-template-columns: repeat(4, 1fr); gap: 30px; height: 130px; align-items: start; }
.stat { height: 100px; display: flex; padding: 10px; background: #fff; border-radius: 3px; box-shadow: 0 4px 8px rgba(0,0,0,.03); }
.box { width: 80px; height: 80px; border-radius: 3px; display: flex; align-items: center; justify-content: center; }
.primary { background: #6777ef; }
.danger { background: #fc544b; }
.warning { background: #ffa426; }
.success { background: #47c363; }
.txt { margin-left: 15px; padding-top: 11px; }
h4 { margin: 0; font-size: 13.500px; line-height: 20px; font-weight: 600; letter-spacing: .6px; color: #98a6ad; white-space: nowrap; }
p { margin: 2px 0 0; font-size: 20px; line-height: 24px; font-weight: 700; color: #34395e; letter-spacing: .4px; }
.cardfoot { height: 61px; background: #f7f9f8; padding-left: 25px; line-height: 59px; font-size: 14px; letter-spacing: .1px; color: #6c757d; }
.foot { margin: auto -30px 0; height: 68px; padding: 0 30px 8px; border-top: 1px solid #e0e8ef; display: flex; align-items: center; justify-content: space-between; font-size: 14px; letter-spacing: .14px; color: #98a6ad; }
.foot i { display: inline-block; width: 5px; height: 5px; border-radius: 50%; background: #98a6ad; margin: 0 5px 0; }
.foot a { color: #6777ef; letter-spacing: .36px; }
.scroll { width: 15px; flex: none; background: #f1f1f1; display: flex; flex-direction: column; }
.thumb { height: 588px; margin-bottom: 19px; background: #cdcdcd; }
</style>
